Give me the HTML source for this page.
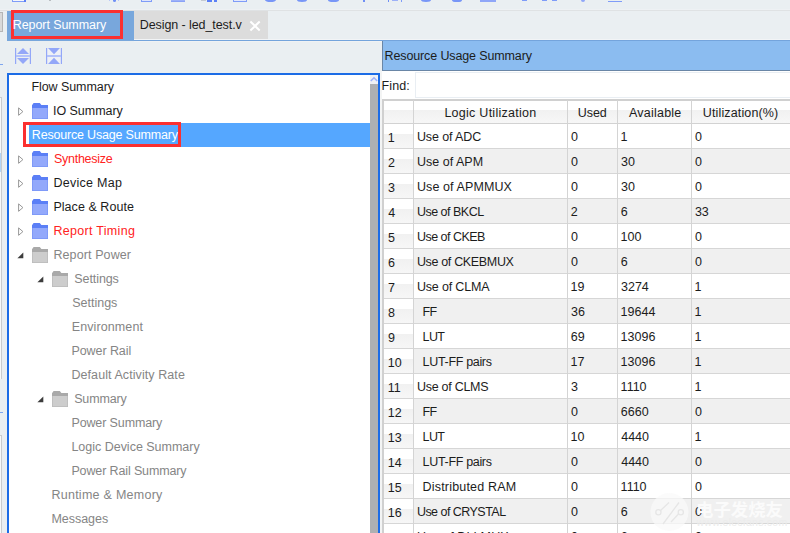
<!DOCTYPE html>
<html><head><meta charset="utf-8"><title>Report Summary</title>
<style>
html,body{margin:0;padding:0}
body{width:790px;height:533px;overflow:hidden;background:#eaeff2;position:relative;font-family:"Liberation Sans", sans-serif;font-size:12.5px}
.b{position:absolute;display:block}
.t{position:absolute;white-space:pre;line-height:normal;font-size:12.5px}
</style></head><body>
<div class="b" style="left:12px;top:0px;width:14px;height:1.8px;background:#7f9cf8;"></div><div class="b" style="left:13px;top:0px;width:10.5px;height:1px;background:#f4f6fb;"></div><div class="b" style="left:23.5px;top:0px;width:2.3px;height:1.9px;background:#5b7ff6;"></div><div class="b" style="left:48.5px;top:0px;width:2px;height:1px;background:#b8bcc0;"></div><div class="b" style="left:112.5px;top:0px;width:3px;height:1.8px;background:#6f8ff5;border-radius:0 0 2px 2px"></div><div class="b" style="left:109.3px;top:0px;width:1.2px;height:0.8px;background:#b9c7f9;"></div><div class="b" style="left:117.5px;top:0px;width:1.2px;height:0.8px;background:#b9c7f9;"></div><div class="b" style="left:141px;top:0px;width:11px;height:1.8px;background:#7f9cf8;"></div><div class="b" style="left:142px;top:0px;width:9px;height:0.9px;background:#dfe5fb;"></div><div class="b" style="left:171px;top:0px;width:14px;height:1.8px;background:#9db1f8;"></div><div class="b" style="left:171px;top:1px;width:14px;height:0.8px;background:#8aa2f7;"></div><div class="b" style="left:201px;top:0px;width:4.5px;height:0.6px;background:#c5cad2;"></div><div class="b" style="left:207px;top:0px;width:5px;height:1.8px;background:#5b7ff6;"></div><div class="b" style="left:214.2px;top:0px;width:2.5px;height:1.8px;background:#5b7ff6;"></div><div class="b" style="left:233px;top:0px;width:14px;height:1.8px;background:#7f9cf8;"></div><div class="b" style="left:234px;top:0px;width:12px;height:0.9px;background:#e3e8fb;"></div><div class="b" style="left:265px;top:0px;width:11px;height:2px;background:#7896f7;border-radius:0 0 50% 50% / 0 0 100% 100%"></div><div class="b" style="left:296.7px;top:0px;width:10.6px;height:2px;background:#7896f7;border-radius:0 0 50% 50% / 0 0 100% 100%"></div><div class="b" style="left:328px;top:0px;width:10.7px;height:2px;background:#7896f7;border-radius:0 0 50% 50% / 0 0 100% 100%"></div><div class="b" style="left:363.2px;top:0px;width:1.8px;height:1.8px;background:#6f8ff5;"></div><div class="b" style="left:388px;top:0px;width:1.2px;height:2px;background:#6f8ff5;"></div><div class="b" style="left:392px;top:0px;width:5.5px;height:0.8px;background:#9db1f8;"></div><div class="b" style="left:401.2px;top:0px;width:1px;height:2px;background:#7f9cf8;"></div><div class="b" style="left:420.8px;top:0px;width:10.6px;height:2px;background:#7896f7;border-radius:0 0 50% 50% / 0 0 100% 100%"></div><div class="b" style="left:451.6px;top:0px;width:10.7px;height:2px;background:#7896f7;border-radius:0 0 50% 50% / 0 0 100% 100%"></div><div class="b" style="left:480px;top:0px;width:16px;height:1.9px;background:#8fa6f8;"></div><div class="b" style="left:522px;top:0px;width:5px;height:0.8px;background:#7f9cf8;"></div><div class="b" style="left:542px;top:0px;width:5px;height:0.8px;background:#7f9cf8;"></div><div class="b" style="left:552px;top:0px;width:5px;height:0.8px;background:#7f9cf8;"></div><div class="b" style="left:581px;top:0px;width:4px;height:1.5px;background:#8fa6f8;border-radius:0 0 2px 2px"></div><div class="b" style="left:608px;top:1px;width:14px;height:0.9px;background:#7f9cf8;"></div>
<div class="b" style="left:0px;top:9px;width:790px;height:1px;background:#eef1f4;"></div><div class="b" style="left:0px;top:10px;width:790px;height:1px;background:#dfe2e4;"></div><div class="b" style="left:7px;top:11px;width:127px;height:30px;background:#78a7dc;"></div><div class="b" style="left:134px;top:10.5px;width:133.85px;height:28.2px;background:#dcdcdc;"></div><div class="b" style="left:134px;top:38.7px;width:656px;height:1.1px;background:#f2f4f6;"></div><div class="b" style="left:7px;top:39.8px;width:783px;height:1.4px;background:#74a4dc;"></div><div class="b" style="left:134px;top:41.2px;width:656px;height:0.8px;background:#f0f2f4;"></div><div class="b" style="left:7px;top:40px;width:127px;height:1px;background:#78a7dc;"></div><div class="b" style="left:0px;top:12px;width:3px;height:20px;background:#d9d9d9;border:1px solid #b5b5b5;border-left:none;box-sizing:border-box"></div><div class="b" style="left:11px;top:10px;width:112px;height:29px;background:transparent;border:3px solid #fb3030;box-sizing:border-box"></div><div class="b" style="left:7px;top:73px;width:373px;height:470px;background:#fff;border:2px solid #1c6ce6;box-sizing:border-box"></div><div class="b" style="left:29px;top:123px;width:341px;height:24px;background:#55a7ff;"></div><div class="b" style="left:23px;top:122px;width:158px;height:25px;background:transparent;border:3px solid #fb3030;box-sizing:border-box"></div><div class="b" style="left:370px;top:75px;width:8px;height:9px;background:#f0f2f5;"></div><div class="b" style="left:370px;top:84px;width:8px;height:460px;background:#aeb0b2;"></div><div class="b" style="left:380px;top:71px;width:2px;height:470px;background:#f3f4f4;"></div><div class="b" style="left:382px;top:41px;width:408px;height:29px;background:#8bbcf0;"></div><div class="b" style="left:382px;top:70px;width:408px;height:1px;background:#6a86a6;"></div><div class="b" style="left:382px;top:41px;width:1px;height:30px;background:#6a86a6;"></div><div class="b" style="left:382px;top:71px;width:408px;height:28px;background:#fff;"></div><div class="b" style="left:415px;top:72px;width:380px;height:26px;background:#fff;border:1.5px solid #e9eef3;box-sizing:border-box"></div><div class="b" style="left:382px;top:99px;width:408px;height:440px;background:#fff;"></div><div class="b" style="left:382px;top:99.4px;width:408px;height:1.3px;background:#d0d0d0;"></div><div class="b" style="left:382px;top:99.4px;width:1.5px;height:440px;background:#d0d0d0;"></div><div class="b" style="left:384px;top:100.7px;width:406px;height:22.3px;background:linear-gradient(#fff 0,#fff 40%,#f1f1f1 42%,#f7f7f7 100%);"></div><div class="b" style="left:383px;top:123px;width:407px;height:1px;background:#d2d2d2;"></div><div class="b" style="left:384px;top:124px;width:29px;height:24.5px;background:linear-gradient(#fff 0,#fff 40%,#f1f1f1 42%,#f7f7f7 100%);"></div><div class="b" style="left:384px;top:148.3px;width:406px;height:1.2px;background:#d6d6d6;"></div><div class="b" style="left:414px;top:149px;width:376px;height:24.5px;background:#f0f0f0;"></div><div class="b" style="left:384px;top:149px;width:29px;height:24.5px;background:linear-gradient(#fff 0,#fff 40%,#f1f1f1 42%,#f7f7f7 100%);"></div><div class="b" style="left:384px;top:173.3px;width:406px;height:1.2px;background:#d6d6d6;"></div><div class="b" style="left:384px;top:174px;width:29px;height:24.5px;background:linear-gradient(#fff 0,#fff 40%,#f1f1f1 42%,#f7f7f7 100%);"></div><div class="b" style="left:384px;top:198.3px;width:406px;height:1.2px;background:#d6d6d6;"></div><div class="b" style="left:414px;top:199px;width:376px;height:24.5px;background:#f0f0f0;"></div><div class="b" style="left:384px;top:199px;width:29px;height:24.5px;background:linear-gradient(#fff 0,#fff 40%,#f1f1f1 42%,#f7f7f7 100%);"></div><div class="b" style="left:384px;top:223.3px;width:406px;height:1.2px;background:#d6d6d6;"></div><div class="b" style="left:384px;top:224px;width:29px;height:24.5px;background:linear-gradient(#fff 0,#fff 40%,#f1f1f1 42%,#f7f7f7 100%);"></div><div class="b" style="left:384px;top:248.3px;width:406px;height:1.2px;background:#d6d6d6;"></div><div class="b" style="left:414px;top:249px;width:376px;height:24.5px;background:#f0f0f0;"></div><div class="b" style="left:384px;top:249px;width:29px;height:24.5px;background:linear-gradient(#fff 0,#fff 40%,#f1f1f1 42%,#f7f7f7 100%);"></div><div class="b" style="left:384px;top:273.3px;width:406px;height:1.2px;background:#d6d6d6;"></div><div class="b" style="left:384px;top:274px;width:29px;height:24.5px;background:linear-gradient(#fff 0,#fff 40%,#f1f1f1 42%,#f7f7f7 100%);"></div><div class="b" style="left:384px;top:298.3px;width:406px;height:1.2px;background:#d6d6d6;"></div><div class="b" style="left:414px;top:299px;width:376px;height:24.5px;background:#f0f0f0;"></div><div class="b" style="left:384px;top:299px;width:29px;height:24.5px;background:linear-gradient(#fff 0,#fff 40%,#f1f1f1 42%,#f7f7f7 100%);"></div><div class="b" style="left:384px;top:323.3px;width:406px;height:1.2px;background:#d6d6d6;"></div><div class="b" style="left:384px;top:324px;width:29px;height:24.5px;background:linear-gradient(#fff 0,#fff 40%,#f1f1f1 42%,#f7f7f7 100%);"></div><div class="b" style="left:384px;top:348.3px;width:406px;height:1.2px;background:#d6d6d6;"></div><div class="b" style="left:414px;top:349px;width:376px;height:24.5px;background:#f0f0f0;"></div><div class="b" style="left:384px;top:349px;width:29px;height:24.5px;background:linear-gradient(#fff 0,#fff 40%,#f1f1f1 42%,#f7f7f7 100%);"></div><div class="b" style="left:384px;top:373.3px;width:406px;height:1.2px;background:#d6d6d6;"></div><div class="b" style="left:384px;top:374px;width:29px;height:24.5px;background:linear-gradient(#fff 0,#fff 40%,#f1f1f1 42%,#f7f7f7 100%);"></div><div class="b" style="left:384px;top:398.3px;width:406px;height:1.2px;background:#d6d6d6;"></div><div class="b" style="left:414px;top:399px;width:376px;height:24.5px;background:#f0f0f0;"></div><div class="b" style="left:384px;top:399px;width:29px;height:24.5px;background:linear-gradient(#fff 0,#fff 40%,#f1f1f1 42%,#f7f7f7 100%);"></div><div class="b" style="left:384px;top:423.3px;width:406px;height:1.2px;background:#d6d6d6;"></div><div class="b" style="left:384px;top:424px;width:29px;height:24.5px;background:linear-gradient(#fff 0,#fff 40%,#f1f1f1 42%,#f7f7f7 100%);"></div><div class="b" style="left:384px;top:448.3px;width:406px;height:1.2px;background:#d6d6d6;"></div><div class="b" style="left:414px;top:449px;width:376px;height:24.5px;background:#f0f0f0;"></div><div class="b" style="left:384px;top:449px;width:29px;height:24.5px;background:linear-gradient(#fff 0,#fff 40%,#f1f1f1 42%,#f7f7f7 100%);"></div><div class="b" style="left:384px;top:473.3px;width:406px;height:1.2px;background:#d6d6d6;"></div><div class="b" style="left:384px;top:474px;width:29px;height:24.5px;background:linear-gradient(#fff 0,#fff 40%,#f1f1f1 42%,#f7f7f7 100%);"></div><div class="b" style="left:384px;top:498.3px;width:406px;height:1.2px;background:#d6d6d6;"></div><div class="b" style="left:414px;top:499px;width:376px;height:24.5px;background:#f0f0f0;"></div><div class="b" style="left:384px;top:499px;width:29px;height:24.5px;background:linear-gradient(#fff 0,#fff 40%,#f1f1f1 42%,#f7f7f7 100%);"></div><div class="b" style="left:384px;top:523.3px;width:406px;height:1.2px;background:#d6d6d6;"></div><div class="b" style="left:384px;top:524px;width:29px;height:24.5px;background:linear-gradient(#fff 0,#fff 40%,#f1f1f1 42%,#f7f7f7 100%);"></div><div class="b" style="left:384px;top:548.3px;width:406px;height:1.2px;background:#d6d6d6;"></div><div class="b" style="left:413px;top:100px;width:1px;height:440px;background:#d4d4d4;"></div><div class="b" style="left:567px;top:100px;width:1px;height:440px;background:#d4d4d4;"></div><div class="b" style="left:617px;top:100px;width:1px;height:440px;background:#d4d4d4;"></div><div class="b" style="left:691px;top:100px;width:1px;height:440px;background:#d4d4d4;"></div>
<div class="b" style="left:0;top:64px;width:3px;height:1px;background:#7fa6ee"></div><div class="b" style="left:0;top:97px;width:2.2px;height:282px;background:linear-gradient(90deg,#f8f9fa 0,#f8f9fa 1.2px,#c9ccce 1.2px)"></div><div class="b" style="left:0;top:97px;width:2.2px;height:1px;background:#c9ccce"></div><div class="b" style="left:0;top:153.4px;width:1.2px;height:18.2px;background:#b5d5f5"></div><div class="b" style="left:0;top:412px;width:2.5px;height:1px;background:#7fa6ee"></div><div class="b" style="left:0;top:435px;width:2.2px;height:100px;background:linear-gradient(90deg,#f8f9fa 0,#f8f9fa 1.2px,#c9ccce 1.2px)"></div><div class="b" style="left:0;top:435px;width:2.2px;height:1px;background:#c9ccce"></div>

<svg class="b" style="left:15px;top:48px" width="16" height="16" viewBox="0 0 16 16">
 <rect x="0" y="0" width="1.2" height="16" fill="#93a7f8"/><rect x="14.8" y="0" width="1.2" height="16" fill="#93a7f8"/>
 <path d="M8 0 L14 6 L2 6 Z" fill="#93a7f8"/><path d="M8 16 L14 10 L2 10 Z" fill="#93a7f8"/>
 <rect x="1" y="7" width="14" height="2" fill="#b3c2fa"/>
</svg>
<svg class="b" style="left:46px;top:48px" width="16" height="16" viewBox="0 0 16 16">
 <rect x="1" y="0" width="14" height="16" fill="#eef1f6"/>
 <rect x="0" y="0" width="1.2" height="16" fill="#93a7f8"/><rect x="14.8" y="0" width="1.2" height="16" fill="#93a7f8"/>
 <path d="M2 0 L14 0 L8 6.2 Z" fill="#93a7f8"/><path d="M2 16 L14 16 L8 9.8 Z" fill="#93a7f8"/>
 <rect x="1" y="7" width="14" height="2" fill="#b3c2fa"/>
</svg>
<svg class="b" style="left:249px;top:20px" width="12" height="12" viewBox="0 0 12 12"><path d="M1.4 1.5 L10.7 10.5 M10.7 1.5 L1.4 10.5" stroke="#fff" stroke-width="2" fill="none"/></svg><svg class="b" style="left:370px;top:76px" width="8" height="7" viewBox="0 0 8 7"><path d="M0.8 5 L4 1.8 L7.2 5" stroke="#9db1fb" stroke-width="1.5" fill="none"/></svg><svg class="b" style="left:32px;top:103px" width="16" height="16" viewBox="0 0 16 16"><path d="M0 5 L0 2.3 L1.6 0 L7.8 0 L9.4 2.1 L16 2.1 L16 5 Z" fill="#5b7ff6"/><rect x="0" y="5" width="16" height="11" fill="#7b97f8"/><rect x="0.8" y="5" width="14.4" height="10.2" fill="#93a9fb"/></svg><svg class="b" style="left:18px;top:107px" width="7" height="10" viewBox="0 0 7 10"><path d="M0.6 0.9 L4.9 4.6 L0.6 8.3 Z" stroke="#8c8c8c" stroke-width="0.9" fill="#fff"/></svg><svg class="b" style="left:32px;top:151px" width="16" height="16" viewBox="0 0 16 16"><path d="M0 5 L0 2.3 L1.6 0 L7.8 0 L9.4 2.1 L16 2.1 L16 5 Z" fill="#5b7ff6"/><rect x="0" y="5" width="16" height="11" fill="#7b97f8"/><rect x="0.8" y="5" width="14.4" height="10.2" fill="#93a9fb"/></svg><svg class="b" style="left:18px;top:155px" width="7" height="10" viewBox="0 0 7 10"><path d="M0.6 0.9 L4.9 4.6 L0.6 8.3 Z" stroke="#8c8c8c" stroke-width="0.9" fill="#fff"/></svg><svg class="b" style="left:32px;top:175px" width="16" height="16" viewBox="0 0 16 16"><path d="M0 5 L0 2.3 L1.6 0 L7.8 0 L9.4 2.1 L16 2.1 L16 5 Z" fill="#5b7ff6"/><rect x="0" y="5" width="16" height="11" fill="#7b97f8"/><rect x="0.8" y="5" width="14.4" height="10.2" fill="#93a9fb"/></svg><svg class="b" style="left:18px;top:179px" width="7" height="10" viewBox="0 0 7 10"><path d="M0.6 0.9 L4.9 4.6 L0.6 8.3 Z" stroke="#8c8c8c" stroke-width="0.9" fill="#fff"/></svg><svg class="b" style="left:32px;top:199px" width="16" height="16" viewBox="0 0 16 16"><path d="M0 5 L0 2.3 L1.6 0 L7.8 0 L9.4 2.1 L16 2.1 L16 5 Z" fill="#5b7ff6"/><rect x="0" y="5" width="16" height="11" fill="#7b97f8"/><rect x="0.8" y="5" width="14.4" height="10.2" fill="#93a9fb"/></svg><svg class="b" style="left:18px;top:203px" width="7" height="10" viewBox="0 0 7 10"><path d="M0.6 0.9 L4.9 4.6 L0.6 8.3 Z" stroke="#8c8c8c" stroke-width="0.9" fill="#fff"/></svg><svg class="b" style="left:32px;top:223px" width="16" height="16" viewBox="0 0 16 16"><path d="M0 5 L0 2.3 L1.6 0 L7.8 0 L9.4 2.1 L16 2.1 L16 5 Z" fill="#5b7ff6"/><rect x="0" y="5" width="16" height="11" fill="#7b97f8"/><rect x="0.8" y="5" width="14.4" height="10.2" fill="#93a9fb"/></svg><svg class="b" style="left:18px;top:227px" width="7" height="10" viewBox="0 0 7 10"><path d="M0.6 0.9 L4.9 4.6 L0.6 8.3 Z" stroke="#8c8c8c" stroke-width="0.9" fill="#fff"/></svg><svg class="b" style="left:32px;top:247px" width="16" height="16" viewBox="0 0 16 16"><path d="M0 5 L0 2.3 L1.6 0 L7.8 0 L9.4 2.1 L16 2.1 L16 5 Z" fill="#a9a9a9"/><rect x="0" y="5" width="16" height="11" fill="#bcbcbc"/><rect x="0.8" y="5" width="14.4" height="10.2" fill="#cdcdcd"/></svg><svg class="b" style="left:17px;top:252px" width="7" height="7" viewBox="0 0 7 7"><path d="M6.3 0.5 L6.3 6.2 L0.4 6.2 Z" fill="#3c3c3c"/></svg><svg class="b" style="left:52px;top:271px" width="16" height="16" viewBox="0 0 16 16"><path d="M0 5 L0 2.3 L1.6 0 L7.8 0 L9.4 2.1 L16 2.1 L16 5 Z" fill="#a9a9a9"/><rect x="0" y="5" width="16" height="11" fill="#bcbcbc"/><rect x="0.8" y="5" width="14.4" height="10.2" fill="#cdcdcd"/></svg><svg class="b" style="left:37px;top:276px" width="7" height="7" viewBox="0 0 7 7"><path d="M6.3 0.5 L6.3 6.2 L0.4 6.2 Z" fill="#3c3c3c"/></svg><svg class="b" style="left:52px;top:391px" width="16" height="16" viewBox="0 0 16 16"><path d="M0 5 L0 2.3 L1.6 0 L7.8 0 L9.4 2.1 L16 2.1 L16 5 Z" fill="#a9a9a9"/><rect x="0" y="5" width="16" height="11" fill="#bcbcbc"/><rect x="0.8" y="5" width="14.4" height="10.2" fill="#cdcdcd"/></svg><svg class="b" style="left:37px;top:396px" width="7" height="7" viewBox="0 0 7 7"><path d="M6.3 0.5 L6.3 6.2 L0.4 6.2 Z" fill="#3c3c3c"/></svg>
<span class="t" style="left:12.72px;top:17.7px;color:#fff;letter-spacing:-0.070px">Report Summary</span><span class="t" style="left:139.82px;top:17.7px;color:#1c1c1c;letter-spacing:-0.086px">Design - led_test.v</span><span class="t" style="left:31.42px;top:80.0px;color:#1c1c1c;letter-spacing:-0.070px">Flow Summary</span><span class="t" style="left:53.02px;top:104.0px;color:#1c1c1c;letter-spacing:-0.042px">IO Summary</span><span class="t" style="left:31.82px;top:128.0px;color:#fff;letter-spacing:-0.185px">Resource Usage Summary</span><span class="t" style="left:54.01px;top:152.0px;color:#ff2222;letter-spacing:-0.273px">Synthesize</span><span class="t" style="left:53.42px;top:176.0px;color:#1c1c1c;letter-spacing:0.287px">Device Map</span><span class="t" style="left:53.42px;top:200.0px;color:#1c1c1c;letter-spacing:0.047px">Place &amp; Route</span><span class="t" style="left:53.42px;top:224.0px;color:#ff2222;letter-spacing:0.305px">Report Timing</span><span class="t" style="left:53.42px;top:248.0px;color:#858585;letter-spacing:0.109px">Report Power</span><span class="t" style="left:74.31px;top:272.0px;color:#858585;letter-spacing:-0.084px">Settings</span><span class="t" style="left:72.31px;top:296.0px;color:#858585;letter-spacing:-0.013px">Settings</span><span class="t" style="left:71.72px;top:320.0px;color:#858585;letter-spacing:0.105px">Environment</span><span class="t" style="left:71.42px;top:344.0px;color:#858585;letter-spacing:-0.071px">Power Rail</span><span class="t" style="left:71.42px;top:368.0px;color:#858585;letter-spacing:0.081px">Default Activity Rate</span><span class="t" style="left:74.21px;top:392.0px;color:#858585;letter-spacing:-0.166px">Summary</span><span class="t" style="left:71.42px;top:416.0px;color:#858585;letter-spacing:-0.118px">Power Summary</span><span class="t" style="left:71.42px;top:440.0px;color:#858585;letter-spacing:-0.013px">Logic Device Summary</span><span class="t" style="left:71.42px;top:464.0px;color:#858585;letter-spacing:-0.130px">Power Rail Summary</span><span class="t" style="left:51.42px;top:488.0px;color:#858585;letter-spacing:0.266px">Runtime &amp; Memory</span><span class="t" style="left:51.42px;top:512.0px;color:#858585;letter-spacing:-0.031px">Messages</span><span class="t" style="left:384.52px;top:48.7px;color:#1c1c1c;letter-spacing:-0.123px">Resource Usage Summary</span><span class="t" style="left:381.62px;top:78.7px;color:#1c1c1c;letter-spacing:0.052px">Find:</span><span class="t" style="left:444.42px;top:105.5px;color:#1c1c1c;letter-spacing:0.264px">Logic Utilization</span><span class="t" style="left:577.82px;top:105.5px;color:#1c1c1c;letter-spacing:-0.101px">Used</span><span class="t" style="left:628.90px;top:105.5px;color:#1c1c1c;letter-spacing:0.236px">Available</span><span class="t" style="left:702.82px;top:105.5px;color:#1c1c1c;letter-spacing:0.138px">Utilization(%)</span><span class="t" style="left:416.92px;top:130.2px;color:#1c1c1c;letter-spacing:-0.100px">Use of ADC</span><span class="t" style="left:416.92px;top:155.2px;color:#1c1c1c;letter-spacing:0.025px">Use of APM</span><span class="t" style="left:416.92px;top:180.2px;color:#1c1c1c;letter-spacing:0.103px">Use of APMMUX</span><span class="t" style="left:416.92px;top:205.2px;color:#1c1c1c;letter-spacing:-0.497px">Use of BKCL</span><span class="t" style="left:416.92px;top:230.2px;color:#1c1c1c;letter-spacing:-0.513px">Use of CKEB</span><span class="t" style="left:416.92px;top:255.2px;color:#1c1c1c;letter-spacing:-0.339px">Use of CKEBMUX</span><span class="t" style="left:416.92px;top:280.2px;color:#1c1c1c;letter-spacing:-0.172px">Use of CLMA</span><span class="t" style="left:422.62px;top:305.2px;color:#1c1c1c;letter-spacing:-0.700px">FF</span><span class="t" style="left:422.62px;top:330.2px;color:#1c1c1c;letter-spacing:-0.617px">LUT</span><span class="t" style="left:422.62px;top:355.2px;color:#1c1c1c;letter-spacing:-0.325px">LUT-FF pairs</span><span class="t" style="left:416.92px;top:380.2px;color:#1c1c1c;letter-spacing:-0.264px">Use of CLMS</span><span class="t" style="left:422.62px;top:405.2px;color:#1c1c1c;letter-spacing:-0.700px">FF</span><span class="t" style="left:422.62px;top:430.2px;color:#1c1c1c;letter-spacing:-0.617px">LUT</span><span class="t" style="left:422.62px;top:455.2px;color:#1c1c1c;letter-spacing:-0.325px">LUT-FF pairs</span><span class="t" style="left:422.62px;top:480.2px;color:#1c1c1c;letter-spacing:0.180px">Distributed RAM</span><span class="t" style="left:416.92px;top:505.2px;color:#1c1c1c;letter-spacing:-0.532px">Use of CRYSTAL</span><span class="t" style="left:416.92px;top:530.2px;color:#1c1c1c;letter-spacing:0.117px">Use of DLLMUX</span><span class="t" style="left:387.72px;top:131.0px;color:#1c1c1c;letter-spacing:0.000px">1</span><span class="t" style="left:571.01px;top:130.2px;color:#1c1c1c;letter-spacing:0.000px">0</span><span class="t" style="left:620.62px;top:130.2px;color:#1c1c1c;letter-spacing:0.000px">1</span><span class="t" style="left:694.91px;top:130.2px;color:#1c1c1c;letter-spacing:0.000px">0</span><span class="t" style="left:387.91px;top:156.0px;color:#1c1c1c;letter-spacing:0.000px">2</span><span class="t" style="left:571.01px;top:155.2px;color:#1c1c1c;letter-spacing:0.000px">0</span><span class="t" style="left:621.01px;top:155.2px;color:#1c1c1c;letter-spacing:0.000px">30</span><span class="t" style="left:694.91px;top:155.2px;color:#1c1c1c;letter-spacing:0.000px">0</span><span class="t" style="left:388.11px;top:181.0px;color:#1c1c1c;letter-spacing:0.000px">3</span><span class="t" style="left:571.01px;top:180.2px;color:#1c1c1c;letter-spacing:0.000px">0</span><span class="t" style="left:621.01px;top:180.2px;color:#1c1c1c;letter-spacing:0.000px">30</span><span class="t" style="left:694.91px;top:180.2px;color:#1c1c1c;letter-spacing:0.000px">0</span><span class="t" style="left:388.30px;top:206.0px;color:#1c1c1c;letter-spacing:0.000px">4</span><span class="t" style="left:570.81px;top:205.2px;color:#1c1c1c;letter-spacing:0.000px">2</span><span class="t" style="left:620.81px;top:205.2px;color:#1c1c1c;letter-spacing:0.000px">6</span><span class="t" style="left:694.91px;top:205.2px;color:#1c1c1c;letter-spacing:0.000px">33</span><span class="t" style="left:388.11px;top:231.0px;color:#1c1c1c;letter-spacing:0.000px">5</span><span class="t" style="left:571.01px;top:230.2px;color:#1c1c1c;letter-spacing:0.000px">0</span><span class="t" style="left:620.62px;top:230.2px;color:#1c1c1c;letter-spacing:0.000px">100</span><span class="t" style="left:694.91px;top:230.2px;color:#1c1c1c;letter-spacing:0.000px">0</span><span class="t" style="left:387.91px;top:256.0px;color:#1c1c1c;letter-spacing:0.000px">6</span><span class="t" style="left:571.01px;top:255.2px;color:#1c1c1c;letter-spacing:0.000px">0</span><span class="t" style="left:620.81px;top:255.2px;color:#1c1c1c;letter-spacing:0.000px">6</span><span class="t" style="left:694.91px;top:255.2px;color:#1c1c1c;letter-spacing:0.000px">0</span><span class="t" style="left:387.91px;top:281.0px;color:#1c1c1c;letter-spacing:0.000px">7</span><span class="t" style="left:570.62px;top:280.2px;color:#1c1c1c;letter-spacing:0.000px">19</span><span class="t" style="left:621.01px;top:280.2px;color:#1c1c1c;letter-spacing:0.000px">3274</span><span class="t" style="left:694.52px;top:280.2px;color:#1c1c1c;letter-spacing:0.000px">1</span><span class="t" style="left:388.11px;top:306.0px;color:#1c1c1c;letter-spacing:0.000px">8</span><span class="t" style="left:571.01px;top:305.2px;color:#1c1c1c;letter-spacing:0.000px">36</span><span class="t" style="left:620.62px;top:305.2px;color:#1c1c1c;letter-spacing:0.000px">19644</span><span class="t" style="left:694.52px;top:305.2px;color:#1c1c1c;letter-spacing:0.000px">1</span><span class="t" style="left:387.91px;top:331.0px;color:#1c1c1c;letter-spacing:0.000px">9</span><span class="t" style="left:570.81px;top:330.2px;color:#1c1c1c;letter-spacing:0.000px">69</span><span class="t" style="left:620.62px;top:330.2px;color:#1c1c1c;letter-spacing:0.000px">13096</span><span class="t" style="left:694.52px;top:330.2px;color:#1c1c1c;letter-spacing:0.000px">1</span><span class="t" style="left:387.72px;top:356.0px;color:#1c1c1c;letter-spacing:0.000px">10</span><span class="t" style="left:570.62px;top:355.2px;color:#1c1c1c;letter-spacing:0.000px">17</span><span class="t" style="left:620.62px;top:355.2px;color:#1c1c1c;letter-spacing:0.000px">13096</span><span class="t" style="left:694.52px;top:355.2px;color:#1c1c1c;letter-spacing:0.000px">1</span><span class="t" style="left:387.72px;top:381.0px;color:#1c1c1c;letter-spacing:0.000px">11</span><span class="t" style="left:571.01px;top:380.2px;color:#1c1c1c;letter-spacing:0.000px">3</span><span class="t" style="left:620.62px;top:380.2px;color:#1c1c1c;letter-spacing:0.000px">1110</span><span class="t" style="left:694.52px;top:380.2px;color:#1c1c1c;letter-spacing:0.000px">1</span><span class="t" style="left:387.72px;top:406.0px;color:#1c1c1c;letter-spacing:0.000px">12</span><span class="t" style="left:571.01px;top:405.2px;color:#1c1c1c;letter-spacing:0.000px">0</span><span class="t" style="left:620.81px;top:405.2px;color:#1c1c1c;letter-spacing:0.000px">6660</span><span class="t" style="left:694.91px;top:405.2px;color:#1c1c1c;letter-spacing:0.000px">0</span><span class="t" style="left:387.72px;top:431.0px;color:#1c1c1c;letter-spacing:0.000px">13</span><span class="t" style="left:570.62px;top:430.2px;color:#1c1c1c;letter-spacing:0.000px">10</span><span class="t" style="left:621.20px;top:430.2px;color:#1c1c1c;letter-spacing:0.000px">4440</span><span class="t" style="left:694.52px;top:430.2px;color:#1c1c1c;letter-spacing:0.000px">1</span><span class="t" style="left:387.72px;top:456.0px;color:#1c1c1c;letter-spacing:0.000px">14</span><span class="t" style="left:571.01px;top:455.2px;color:#1c1c1c;letter-spacing:0.000px">0</span><span class="t" style="left:621.20px;top:455.2px;color:#1c1c1c;letter-spacing:0.000px">4440</span><span class="t" style="left:694.91px;top:455.2px;color:#1c1c1c;letter-spacing:0.000px">0</span><span class="t" style="left:387.72px;top:481.0px;color:#1c1c1c;letter-spacing:0.000px">15</span><span class="t" style="left:571.01px;top:480.2px;color:#1c1c1c;letter-spacing:0.000px">0</span><span class="t" style="left:620.62px;top:480.2px;color:#1c1c1c;letter-spacing:0.000px">1110</span><span class="t" style="left:694.91px;top:480.2px;color:#1c1c1c;letter-spacing:0.000px">0</span><span class="t" style="left:387.72px;top:506.0px;color:#1c1c1c;letter-spacing:0.000px">16</span><span class="t" style="left:571.01px;top:505.2px;color:#1c1c1c;letter-spacing:0.000px">0</span><span class="t" style="left:620.81px;top:505.2px;color:#1c1c1c;letter-spacing:0.000px">6</span><span class="t" style="left:694.91px;top:505.2px;color:#1c1c1c;letter-spacing:0.000px">0</span><span class="t" style="left:387.72px;top:531.0px;color:#1c1c1c;letter-spacing:0.000px">17</span><span class="t" style="left:571.01px;top:530.2px;color:#1c1c1c;letter-spacing:0.000px">0</span><span class="t" style="left:620.81px;top:530.2px;color:#1c1c1c;letter-spacing:0.000px">6</span><span class="t" style="left:694.91px;top:530.2px;color:#1c1c1c;letter-spacing:0.000px">0</span>
<div class="b" style="left:650px;top:493px;width:140px;height:40px">
<svg class="b" style="left:0;top:0" width="40" height="40" viewBox="0 0 40 40"><circle cx="19.4" cy="19" r="19" fill="#f9f9f9" fill-opacity=".75"/><path d="M10.5 17.5 L19 9.5 M13 31 L29 9.5 M21 29 L28.5 21" stroke="#e6e6e6" stroke-width="1.3" fill="none"/><circle cx="8.4" cy="19.2" r="2.6" fill="none" stroke="#e6e6e6" stroke-width="1.3"/><circle cx="30.8" cy="19.2" r="2.6" fill="none" stroke="#e6e6e6" stroke-width="1.3"/></svg>
<span class="t" style="left:46px;top:3px;font:bold 17.4px 'Liberation Sans','Noto Sans CJK SC',sans-serif;color:#fbfbfb;letter-spacing:0">电子发烧友</span>
<span class="t" style="left:46.5px;top:23px;font:10.5px 'Liberation Sans',sans-serif;color:#ececec;letter-spacing:0.25px">www.elecfans.com</span>
</div>
</body></html>
